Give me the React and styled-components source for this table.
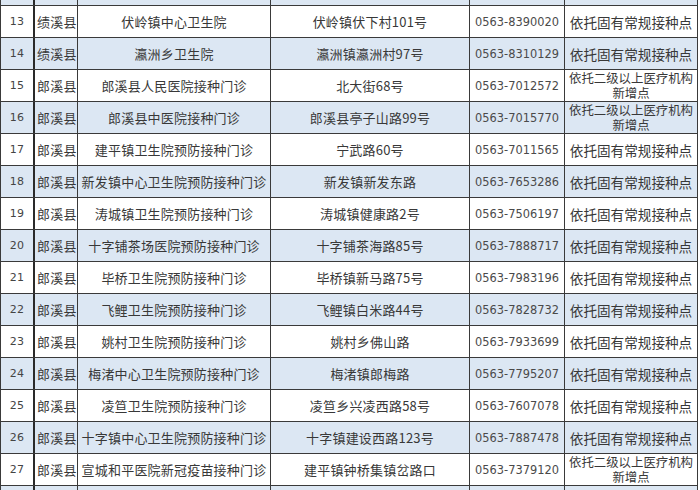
import React from "react";
import styled, { createGlobalStyle } from "styled-components";

const rows = [
  ["13", "绩溪县", "伏岭镇中心卫生院", "伏岭镇伏下村101号", "0563-8390020", "依托固有常规接种点"],
  ["14", "绩溪县", "瀛洲乡卫生院", "瀛洲镇瀛洲村97号", "0563-8310129", "依托固有常规接种点"],
  ["15", "郎溪县", "郎溪县人民医院接种门诊", "北大街68号", "0563-7012572", "依托二级以上医疗机构新增点"],
  ["16", "郎溪县", "郎溪县中医院接种门诊", "郎溪县亭子山路99号", "0563-7015770", "依托二级以上医疗机构新增点"],
  ["17", "郎溪县", "建平镇卫生院预防接种门诊", "宁武路60号", "0563-7011565", "依托固有常规接种点"],
  ["18", "郎溪县", "新发镇中心卫生院预防接种门诊", "新发镇新发东路", "0563-7653286", "依托固有常规接种点"],
  ["19", "郎溪县", "涛城镇卫生院预防接种门诊", "涛城镇健康路2号", "0563-7506197", "依托固有常规接种点"],
  ["20", "郎溪县", "十字铺茶场医院预防接种门诊", "十字铺茶海路85号", "0563-7888717", "依托固有常规接种点"],
  ["21", "郎溪县", "毕桥卫生院预防接种门诊", "毕桥镇新马路75号", "0563-7983196", "依托固有常规接种点"],
  ["22", "郎溪县", "飞鲤卫生院预防接种门诊", "飞鲤镇白米路44号", "0563-7828732", "依托固有常规接种点"],
  ["23", "郎溪县", "姚村卫生院预防接种门诊", "姚村乡佛山路", "0563-7933699", "依托固有常规接种点"],
  ["24", "郎溪县", "梅渚中心卫生院预防接种门诊", "梅渚镇郎梅路", "0563-7795207", "依托固有常规接种点"],
  ["25", "郎溪县", "凌笪卫生院预防接种门诊", "凌笪乡兴凌西路58号", "0563-7607078", "依托固有常规接种点"],
  ["26", "郎溪县", "十字镇中心卫生院预防接种门诊", "十字镇建设西路123号", "0563-7887478", "依托固有常规接种点"],
  ["27", "郎溪县", "宣城和平医院新冠疫苗接种门诊", "建平镇钟桥集镇岔路口", "0563-7379120", "依托二级以上医疗机构新增点"],
];

const GlobalStyle = createGlobalStyle`
  html, body {
    margin: 0;
    padding: 0;
    background: #ffffff;
  }
  body {
    width: 700px;
    height: 490px;
    overflow: hidden;
    font-family: "Noto Sans CJK SC", "Liberation Sans", sans-serif;
    color: #383838;
  }
`;

const Sheet = styled.div`
  width: 698px;
  border-left: 1px solid #3a3a3a;
  box-sizing: border-box;
`;

const Row = styled.div`
  display: grid;
  grid-template-columns: 34px 43px 193px 199px 95px 133px;
  height: ${(p) => p.$h || 32}px;
  background: ${(p) => (p.$blue ? "#dce7f3" : "#ffffff")};
  border-bottom: ${(p) => (p.$open ? "none" : "1px solid #3a3a3a")};
  box-sizing: border-box;
`;

const Cell = styled.div`
  border-right: ${(p) => (p.$heavy ? "2px solid #2a2a2a" : "1px solid #3a3a3a")};
  box-sizing: border-box;
  display: flex;
  align-items: center;
  justify-content: center;
  text-align: center;
  white-space: nowrap;
  overflow: hidden;
  font-size: 13px;
  line-height: 16px;
  letter-spacing: 0.2px;
`;

const NumCell = styled(Cell)`
  font-family: "DejaVu Sans", "Liberation Sans", sans-serif;
  font-size: 11px;
  color: #444;
  padding-top: 1px;
`;

const CountyCell = styled(Cell)`
  justify-content: flex-start;
  padding-left: 2px;
`;

const PhoneCell = styled(Cell)`
  font-family: "DejaVu Sans", "Liberation Sans", sans-serif;
  font-size: 11.4px;
  color: #4a4a4a;
  letter-spacing: 0;
  padding-top: 1px;
`;

const NoteCell = styled(Cell)`
  font-size: ${(p) => (p.$wrap ? 12.4 : 13.6)}px;
  white-space: ${(p) => (p.$wrap ? "normal" : "nowrap")};
  overflow: visible;
  letter-spacing: 0;
  line-height: 15px;
  padding-top: ${(p) => (p.$wrap ? 0 : 1)}px;
`;

const Spacer = ({ h, blue, open }) => (
  <Row $h={h} $blue={blue} $open={open}>
    <Cell $heavy />
    <Cell />
    <Cell />
    <Cell />
    <Cell />
    <Cell />
  </Row>
);

export default function App() {
  return (
    <>
      <GlobalStyle />
      <Sheet>
        <Spacer h={6} blue />
        {rows.map((r, i) => {
          const wrap = r[5].length > 9;
          return (
            <Row key={r[0]} $blue={i % 2 === 1}>
              <NumCell $heavy>{r[0]}</NumCell>
              <CountyCell>{r[1]}</CountyCell>
              <Cell>{r[2]}</Cell>
              <Cell>{r[3]}</Cell>
              <PhoneCell>{r[4]}</PhoneCell>
              <NoteCell $wrap={wrap}>
                {wrap ? (
                  <span>
                    依托二级以上医疗机构
                    <br />
                    新增点
                  </span>
                ) : (
                  r[5]
                )}
              </NoteCell>
            </Row>
          );
        })}
        <Spacer h={6} blue open />
      </Sheet>
    </>
  );
}
